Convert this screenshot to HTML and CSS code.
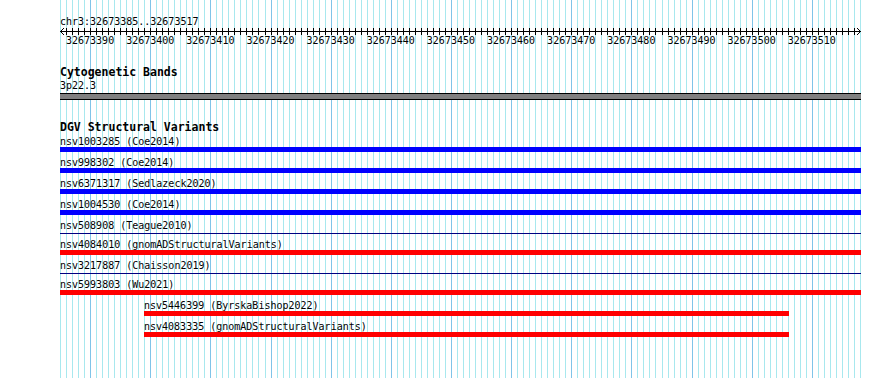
FILE: index.html
```html
<!DOCTYPE html>
<html lang="en">
<head>
    <meta charset="UTF-8">
    <meta name="viewport" content="width=device-width, initial-scale=1.0">
    <title>chr3:32673385..32673517</title>
    <link rel="stylesheet" href="styles.css">
</head>
<body>
    <div class="view">
        <svg class="grid" id="grid" xmlns="http://www.w3.org/2000/svg"></svg>
        <div class="tracks">
            <div class="locus">chr3:32673385..32673517</div>
            <svg class="ruler" id="ruler" width="802" height="8" xmlns="http://www.w3.org/2000/svg">
                <line x1="0" y1="4.5" x2="801" y2="4.5"></line>
                <polyline points="4,1 0.5,4.5 4,8"></polyline>
                <polyline points="797,1 800.5,4.5 797,8"></polyline>
            </svg>
            <div class="ruler-labels">
                <span>32673390</span>
                <span>32673400</span>
                <span>32673410</span>
                <span>32673420</span>
                <span>32673430</span>
                <span>32673440</span>
                <span>32673450</span>
                <span>32673460</span>
                <span>32673470</span>
                <span>32673480</span>
                <span>32673490</span>
                <span>32673500</span>
                <span>32673510</span>
            </div>

            <div class="track cytobands">
                <div class="track-title">Cytogenetic Bands</div>
                <div class="band-label">3p22.3</div>
                <div class="band"></div>
            </div>

            <div class="track dgv">
                <div class="track-title">DGV Structural Variants</div>
                <div class="feature">
                    <div class="feature-label">nsv1003285 (Coe2014)</div>
                    <div class="bar blue"></div>
                </div>
                <div class="feature">
                    <div class="feature-label">nsv998302 (Coe2014)</div>
                    <div class="bar blue"></div>
                </div>
                <div class="feature">
                    <div class="feature-label">nsv6371317 (Sedlazeck2020)</div>
                    <div class="bar blue"></div>
                </div>
                <div class="feature">
                    <div class="feature-label">nsv1004530 (Coe2014)</div>
                    <div class="bar blue"></div>
                </div>
                <div class="feature">
                    <div class="feature-label">nsv508908 (Teague2010)</div>
                    <div class="bar thin"></div>
                </div>
                <div class="feature">
                    <div class="feature-label">nsv4084010 (gnomADStructuralVariants)</div>
                    <div class="bar red"></div>
                </div>
                <div class="feature">
                    <div class="feature-label">nsv3217887 (Chaisson2019)</div>
                    <div class="bar thin"></div>
                </div>
                <div class="feature">
                    <div class="feature-label">nsv5993803 (Wu2021)</div>
                    <div class="bar red"></div>
                </div>
                <div class="feature" style="margin-left: 84px; width: 645px;">
                    <div class="feature-label">nsv5446399 (ByrskaBishop2022)</div>
                    <div class="bar red"></div>
                </div>
                <div class="feature" style="margin-left: 84px; width: 645px;">
                    <div class="feature-label">nsv4083335 (gnomADStructuralVariants)</div>
                    <div class="bar red"></div>
                </div>
            </div>
        </div>
    </div>
    <script>
        // 133 bases across 800px, one grid line and one ruler tick per base
        const bases = 133;
        const span = 800;
        const ns = 'http://www.w3.org/2000/svg';
        const grid = document.getElementById('grid');
        const ruler = document.getElementById('ruler');

        for (let i = 0; i <= bases; i++) {
            const x = Math.round(i * span / bases) + 0.5;

            const line = document.createElementNS(ns, 'line');
            line.setAttribute('x1', x);
            line.setAttribute('x2', x);
            line.setAttribute('y1', 0);
            line.setAttribute('y2', '100%');
            // every 10th base (32673390, 32673400, ...) gets the darker line
            line.setAttribute('class', (i + 5) % 10 === 0 ? 'major' : 'minor');
            grid.appendChild(line);

            if (i > 0 && i < bases) {
                const tick = document.createElementNS(ns, 'line');
                tick.setAttribute('x1', x);
                tick.setAttribute('x2', x);
                tick.setAttribute('y1', 1);
                tick.setAttribute('y2', 8);
                ruler.appendChild(tick);
            }
        }
    </script>
</body>
</html>
```

FILE: styles.css
```css
body {
    font-family: "DejaVu Sans Mono", "Liberation Mono", monospace;
    font-size: 10px;
    background-color: #ffffff;
    color: #000000;
    margin: 0;
}
.view {
    position: relative;
    margin-left: 60px;
    width: 801px;
    min-height: 100vh;
}
.grid {
    position: absolute;
    top: 0;
    left: 0;
    width: 801px;
    height: 100%;
    shape-rendering: crispEdges;
}
.grid line {
    stroke-width: 1;
}
.grid .minor {
    stroke: #a8e8ee;
}
.grid .major {
    stroke: #80c4e8;
}
.tracks {
    position: relative;
    padding-top: 16px;
}
.locus {
    line-height: 11px;
    white-space: nowrap;
}
.ruler {
    display: block;
    overflow: visible;
    shape-rendering: crispEdges;
}
.ruler line, .ruler polyline {
    stroke: #000000;
    stroke-width: 1;
    fill: none;
}
.ruler-labels {
    display: flex;
    line-height: 11px;
}
.ruler-labels span {
    flex: 0 0 60.15px;
    text-align: center;
}
.track-title {
    font-weight: bold;
    font-size: 11.5px;
    line-height: 13px;
    white-space: nowrap;
}
.cytobands {
    margin-top: 20px;
}
.band-label {
    line-height: 11px;
    margin-top: 1px;
}
.band {
    margin-top: 2px;
    height: 5px;
    background-color: #808080;
    border-top: 1px solid #000000;
    border-bottom: 1px solid #000000;
}
.dgv {
    margin-top: 21px;
}
.dgv .track-title {
    margin-bottom: 2px;
}
.feature {
    margin-bottom: 5px;
}
.feature-label {
    line-height: 11px;
    white-space: nowrap;
}
.bar {
    height: 5px;
}
.bar.blue {
    background-color: #0000ff;
}
.bar.red {
    background-color: #ff0000;
}
.bar.thin {
    height: 1px;
    margin: 2px 0;
    background-color: #000080;
}
```
